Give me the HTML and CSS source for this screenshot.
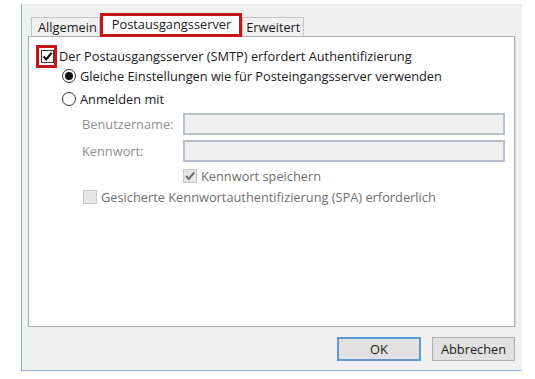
FILE: index.html
```html
<!DOCTYPE html>
<html lang="de">

<head>
  <meta charset="UTF-8">
  <meta name="viewport" content="width=device-width, initial-scale=1.0">
  <title>Kontoeinstellungen</title>
  <link rel="stylesheet" href="styles.css">
</head>

<body>
  <div class="dialog">
    <div class="tabs">
      <div class="tab first">Allgemein</div>
      <div class="tab active">Postausgangsserver</div>
      <div class="tab">Erweitert</div>
    </div>

    <div class="panel">
      <div class="row auth">
        <span class="mark">
          <span class="check">
            <svg viewBox="0 0 11 11" width="11" height="11"><path d="M1.5 5.5 L4.2 8.4 L9.6 1.8" fill="none" stroke="#111" stroke-width="2.2"/></svg>
          </span>
        </span>
        <span>Der Postausgangsserver (SMTP) erfordert Authentifizierung</span>
      </div>
      <div class="row sub">
        <span class="radio selected"></span>
        <span>Gleiche Einstellungen wie für Posteingangsserver verwenden</span>
      </div>
      <div class="row sub login">
        <span class="radio"></span>
        <span>Anmelden mit</span>
      </div>
      <div class="field first">
        <label>Benutzername:</label>
        <input type="text" disabled>
      </div>
      <div class="field">
        <label>Kennwort:</label>
        <input type="password" disabled>
      </div>
      <div class="row save">
        <span class="check disabled">
          <svg viewBox="0 0 12 12" width="12" height="12"><path d="M2 6 L4.8 9 L10.2 2.4" fill="none" stroke="#6e6e6e" stroke-width="2"/></svg>
        </span>
        <span class="muted">Kennwort speichern</span>
      </div>
      <div class="row spa">
        <span class="check disabled"></span>
        <span class="muted">Gesicherte Kennwortauthentifizierung (SPA) erforderlich</span>
      </div>
    </div>

    <div class="buttons">
      <button class="default">OK</button>
      <button>Abbrechen</button>
    </div>
  </div>
</body>

</html>
```

FILE: styles.css
```css
body {
  margin: 0;
  background-color: #fff;
  font-family: "Open Sans", "Noto Sans", sans-serif;
  font-size: 12.8px;
  color: #1a1a1a;
}

.dialog {
  box-sizing: border-box;
  margin: 4px 0 0 21px;
  width: 501px;
  height: 367px;
  background-color: #f0f0f0;
  border-top: 1px solid #e2eeee;
  border-left: 1px solid #8eaed6;
  border-bottom: 1px solid #8eaed6;
}

/* tab strip */
.tabs {
  display: flex;
  align-items: flex-end;
  height: 31px;
  padding-left: 9px;
}

.tab {
  box-sizing: border-box;
  height: 19px;
  padding: 0 3px;
  line-height: 18px;
  background-color: #f0f0f0;
  border: 1px solid #c4c4c4;
  border-bottom: none;
}

.tab.first {
  padding: 0 2px 0 6px;
}

.tab.active {
  height: 24px;
  padding: 0 8px 0 9px;
  line-height: 17px;
  background-color: #fff;
  border: 3px solid #c4161c;
  position: relative;
  z-index: 1;
  margin-bottom: -1px;
}

/* content panel */
.panel {
  box-sizing: border-box;
  margin-left: 6px;
  width: 487px;
  height: 291px;
  background-color: #fff;
  border: 1px solid #adadad;
  box-shadow: 1px 0 0 #dcdcdc;
  padding: 9px 0 0 12px;
}

.row {
  display: flex;
  align-items: center;
  height: 20px;
  gap: 5px;
}

.row.sub {
  padding-left: 21px;
  gap: 4px;
}

.row.login {
  margin-top: 3px;
}

.row.save {
  margin-top: 4px;
  padding-left: 142px;
  gap: 4px;
}

.row.spa {
  margin-top: 1px;
  padding-left: 42px;
  gap: 4px;
}

.mark {
  position: relative;
  display: inline-flex;
}

.mark::before {
  content: "";
  position: absolute;
  left: -5px;
  top: -5px;
  width: 21px;
  height: 23px;
  box-sizing: border-box;
  border: 3px solid #c4161c;
}

.check {
  box-sizing: border-box;
  display: inline-flex;
  align-items: center;
  justify-content: center;
  width: 13px;
  height: 13px;
  border: 1px solid #333;
  background-color: #fff;
}

.check.disabled {
  width: 14px;
  height: 14px;
  border-color: #c6c6c6;
  background-color: #e6e6e6;
}

.radio {
  box-sizing: border-box;
  width: 14px;
  height: 14px;
  border: 1px solid #333;
  border-radius: 50%;
  background-color: #fff;
  position: relative;
}

.radio.selected::after {
  content: "";
  position: absolute;
  left: 2px;
  top: 2px;
  width: 8px;
  height: 8px;
  border-radius: 50%;
  background-color: #111;
}

.muted {
  color: #6f6f6f;
}

.field {
  display: flex;
  align-items: center;
  margin-top: 5px;
  padding-left: 41px;
}

.field.first {
  margin-top: 4px;
}

.field label {
  width: 101px;
  color: #8f8f8f;
}

.field input {
  box-sizing: border-box;
  width: 322px;
  height: 22px;
  margin: 0;
  background-color: #f0f0f0;
  border: 2px solid #b6bfcb;
}

/* bottom buttons */
.buttons {
  display: flex;
  justify-content: flex-end;
  gap: 11px;
  margin-top: 10px;
  padding-right: 7px;
}

.buttons button {
  box-sizing: border-box;
  width: 83px;
  height: 24px;
  font-family: inherit;
  font-size: 12.8px;
  color: #1a1a1a;
  background-color: #e1e1e1;
  border: 1px solid #adadad;
}

.buttons button.default {
  width: 84px;
  border: 2px solid #5b9bd5;
}
```
